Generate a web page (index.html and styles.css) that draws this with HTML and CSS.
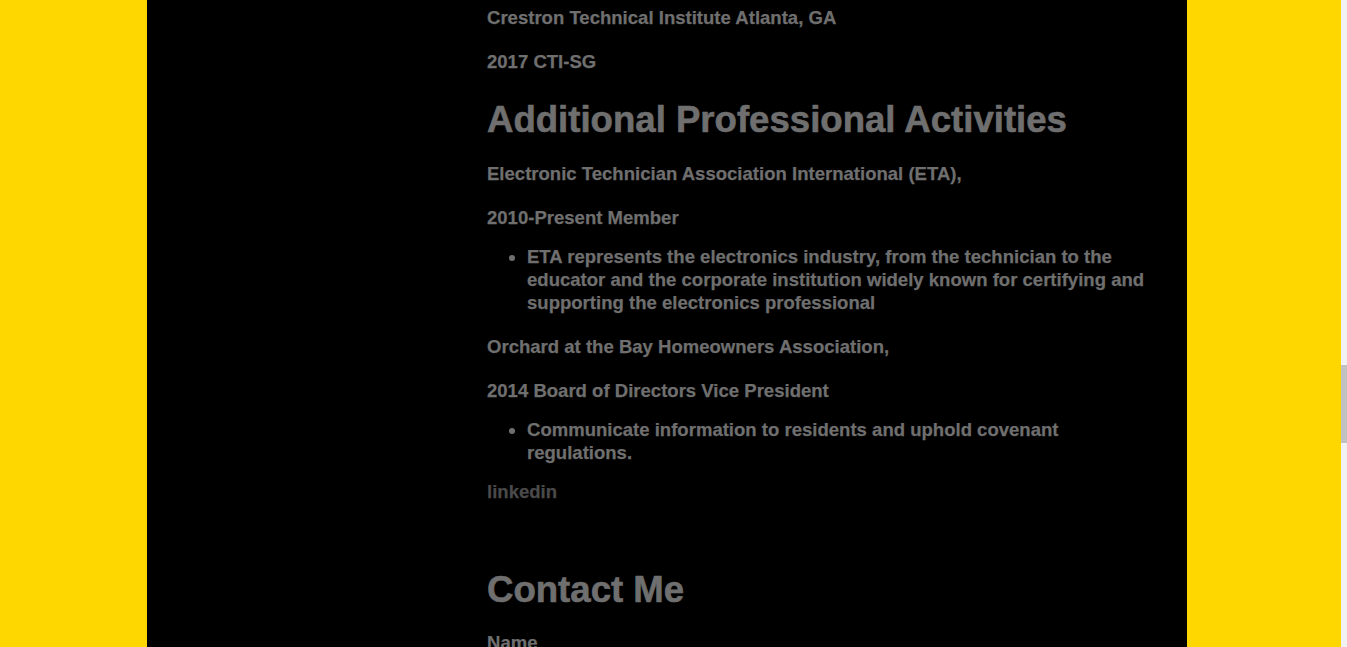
FILE: index.html
```html
<!DOCTYPE html>
<html lang="en">
<head>
<meta charset="utf-8">
<title>Resume</title>
<link rel="stylesheet" href="styles.css">
</head>
<body>
<div class="viewport">
  <div class="page">
    <div class="column">
      <div class="sidebar"></div>
      <main class="content">
        <section class="section education">
          <p class="line first">Crestron Technical Institute Atlanta, GA</p>
          <p class="line">2017 CTI-SG</p>
        </section>
        <section class="section activities">
          <h2 class="heading">Additional Professional Activities</h2>
          <p class="line">Electronic Technician Association International (ETA),</p>
          <p class="line">2010-Present Member</p>
          <ul class="bullets">
            <li>ETA represents the electronics industry, from the technician to the educator and the corporate institution widely known for certifying and supporting the electronics professional</li>
          </ul>
          <p class="line">Orchard at the Bay Homeowners Association,</p>
          <p class="line">2014 Board of Directors Vice President</p>
          <ul class="bullets">
            <li>Communicate information to residents and uphold covenant regulations.</li>
          </ul>
          <a class="link" href="#">linkedin</a>
        </section>
        <section class="section contact">
          <h2 class="heading">Contact Me</h2>
          <label class="field-label">Name</label>
        </section>
      </main>
    </div>
  </div>
  <div class="scrollbar"><div class="thumb"></div></div>
</div>
</body>
</html>
```
FILE: styles.css
```css
html, body {
  margin: 0;
  padding: 0;
  height: 100%;
  overflow: hidden;
}
body {
  background: #ffd700;
  font-family: "Liberation Sans", Arial, sans-serif;
  font-weight: bold;
  color: #6f6f6f;
}
.viewport {
  display: flex;
  height: 647px;
}
.page {
  flex: 1;
  display: flex;
  padding-left: 147px;
  overflow: hidden;
}
.column {
  width: 1040px;
  background: #000;
  display: flex;
}
.sidebar {
  width: 340px;
  flex: none;
}
.content {
  width: 680px;
  font-size: 18.5px;
  line-height: 23px;
  letter-spacing: 0.02px;
  -webkit-text-stroke: 0.25px currentColor;
}
.section { margin: 0; }
.line {
  margin: 21px 0 16px;
}
.line.first {
  margin-top: 6px;
}
.heading {
  font-size: 36.6px;
  line-height: 42px;
  letter-spacing: 0;
  margin: 26px 0 0;
  -webkit-text-stroke: 0.6px currentColor;
}
.bullets {
  margin: 16px 0;
  padding-left: 40px;
}
.link {
  display: block;
  color: #4a4a4a;
  text-decoration: none;
}
.contact {
  padding-top: 66px;
}
.contact .heading {
  margin-top: 0;
}
.field-label {
  display: block;
  margin-top: 20px;
}
.scrollbar {
  width: 6px;
  background: #f1f1f1;
}
.thumb {
  margin-top: 365px;
  height: 78px;
  background: #c1c1c1;
}
```
